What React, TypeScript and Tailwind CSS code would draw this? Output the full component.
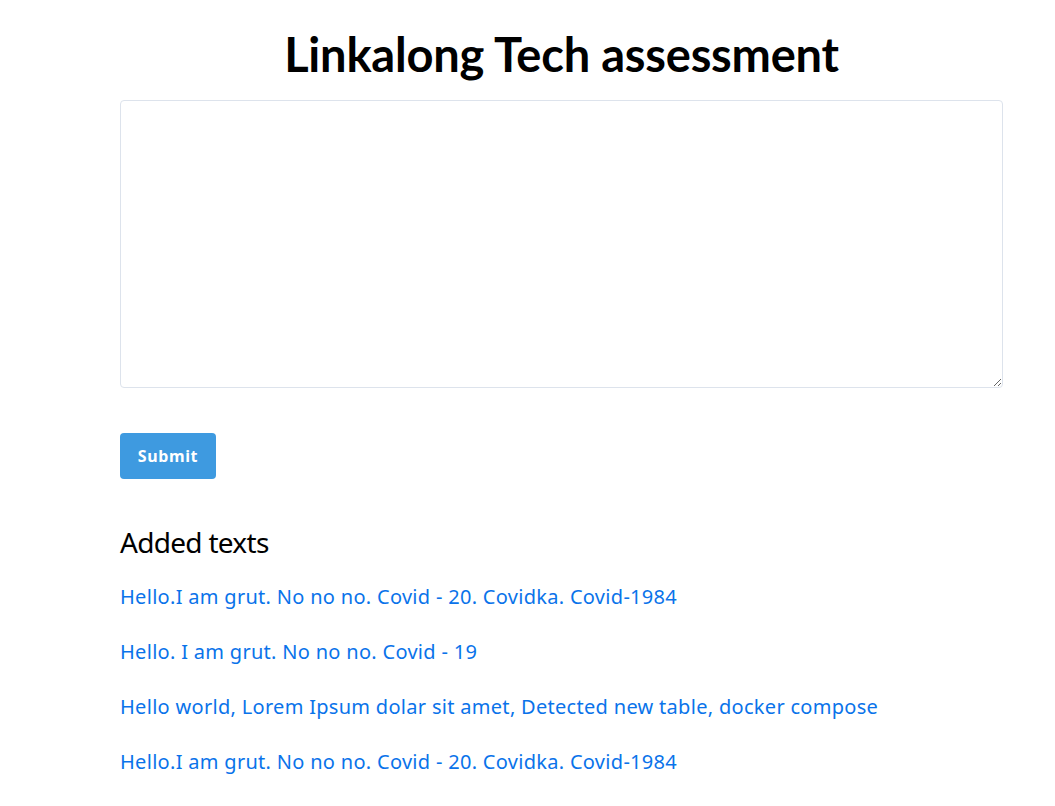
const texts = [
  "Hello.I am grut. No no no. Covid - 20. Covidka. Covid-1984",
  "Hello. I am grut. No no no. Covid - 19",
  "Hello world, Lorem Ipsum dolar sit amet, Detected new table, docker compose",
  "Hello.I am grut. No no no. Covid - 20. Covidka. Covid-1984",
  "Hello. I am uncrown user. We are saying Covid - 19",
];

export default function App() {
  return (
    <div className="h-[806px] overflow-hidden bg-white font-['Noto_Sans',sans-serif]">
      <div className="ml-[120px] w-[883px] pt-[28px]">
        <h1 className="text-center font-['Lato',sans-serif] text-[47px] font-bold leading-[52px] tracking-[-0.2px] text-black">
          Linkalong Tech assessment
        </h1>

        <textarea className="mt-[20px] block h-[288px] w-full rounded-[4px] border border-[#dde3ec] bg-white p-3 text-base outline-none" />

        <button className="mt-[45px] h-[46px] w-[96px] rounded-[4px] bg-[#3e9ae0] text-[16px] font-bold tracking-[0.6px] text-white">
          Submit
        </button>

        <h2 className="mt-[46px] text-[28px] leading-[35px] tracking-[-0.7px] text-black">Added texts</h2>

        <ul className="mt-[22px] flex flex-col gap-[25px]">
          {texts.map((t, i) => (
            <li key={i} className="text-[20px] leading-[30px] tracking-[0.3px] text-[#0a73ea]">
              {t}
            </li>
          ))}
        </ul>
      </div>
    </div>
  );
}
